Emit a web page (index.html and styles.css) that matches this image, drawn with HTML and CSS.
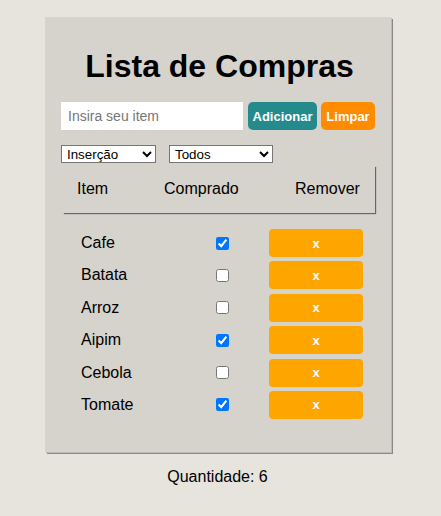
FILE: index.html
```html
<!DOCTYPE html>
<html lang="pt-BR">
<head>
<meta charset="utf-8">
<title>Lista de Compras</title>
<link rel="stylesheet" href="styles.css">
</head>
<body>
<div class="card">
  <h1 class="title">Lista de Compras</h1>
  <div class="add-row">
    <input class="item-input" type="text" placeholder="Insira seu item">
    <button class="btn btn-add">Adicionar</button>
    <button class="btn btn-clear">Limpar</button>
  </div>
  <div class="filters">
    <select class="sel sel-order"><option>Inserção</option></select>
    <select class="sel sel-filter"><option>Todos</option></select>
  </div>
  <div class="head">
    <span>Item</span>
    <span>Comprado</span>
    <span>Remover</span>
  </div>
  <div class="rows">
    <div class="row"><span class="name">Cafe</span><input type="checkbox" class="chk" checked><button class="btn-x">x</button></div>
    <div class="row"><span class="name">Batata</span><input type="checkbox" class="chk"><button class="btn-x">x</button></div>
    <div class="row"><span class="name">Arroz</span><input type="checkbox" class="chk"><button class="btn-x">x</button></div>
    <div class="row"><span class="name">Aipim</span><input type="checkbox" class="chk" checked><button class="btn-x">x</button></div>
    <div class="row"><span class="name">Cebola</span><input type="checkbox" class="chk"><button class="btn-x">x</button></div>
    <div class="row"><span class="name">Tomate</span><input type="checkbox" class="chk" checked><button class="btn-x">x</button></div>
  </div>
</div>
<p class="count">Quantidade: 6</p>
</body>
</html>
```
FILE: styles.css
```css
html, body {
  margin: 0;
  background: #e7e3dd;
  font-family: "Liberation Sans", Arial, sans-serif;
  color: #000;
}
.card {
  box-sizing: border-box;
  width: 346px;
  height: 435px;
  margin: 17px 0 0 45px;
  padding: 31px 16px 0 16px;
  background: #d6d2cc;
  box-shadow: 1px 1px 0 #bbb, 2px 2px 0 #888;
}
.title {
  margin: 0;
  font-size: 32px;
  line-height: 37px;
  font-weight: bold;
  text-align: center;
  padding-left: 3px;
}
.add-row {
  margin-top: 17px;
  display: flex;
  height: 28px;
}
.item-input {
  box-sizing: border-box;
  width: 182px;
  height: 28px;
  border: none;
  margin: 0 5px 0 0;
  padding: 0 7px;
  font-family: "Liberation Sans", Arial, sans-serif;
  font-size: 14px;
  background: #fff;
  outline: none;
}
.item-input::placeholder { color: #777; }
.btn {
  box-sizing: border-box;
  height: 28px;
  border: none;
  border-radius: 5px;
  color: #fff;
  font-family: "Liberation Sans", Arial, sans-serif;
  font-size: 13px;
  font-weight: bold;
  padding: 0;
}
.btn-add { width: 69px; background: #258a8c; margin-right: 4px; }
.btn-clear { width: 54px; background: #ff8c00; }
.filters {
  margin-top: 15px;
  display: flex;
  height: 18px;
}
.sel {
  box-sizing: border-box;
  height: 18px;
  font-family: "Liberation Sans", Arial, sans-serif;
  font-size: 13.33px;
  border: 1px solid #767676;
  border-radius: 0;
  background: #fff;
  padding: 0 0 0 1px;
  margin: 0;
}
.sel-order { width: 95px; margin-right: 13px; }
.sel-filter { width: 104px; }
.head {
  margin-top: 1px;
  height: 49px;
  display: grid;
  grid-template-columns: 87px 131px 1fr;
  align-items: center;
  padding-left: 16px;
  font-size: 16px;
  box-shadow: 2px 2px 1px -1px #666;
}
.rows {
  margin-top: 16px;
  display: flex;
  flex-direction: column;
  gap: 4.4px;
}
.row {
  display: flex;
  align-items: center;
  height: 28px;
  padding-left: 20px;
  font-size: 16px;
}
.name { width: 135px; }
.chk {
  margin: 0 40px 0 0;
  width: 13px;
  height: 13px;
}
.btn-x {
  width: 94px;
  height: 28px;
  border: none;
  border-radius: 4px;
  background: #ffa500;
  color: #fff;
  font-family: "Liberation Sans", Arial, sans-serif;
  font-size: 13px;
  font-weight: bold;
  padding: 0;
}
.count {
  margin: 16px 0 0 0;
  padding-right: 6px;
  text-align: center;
  font-size: 16px;
  line-height: 18px;
}
```
